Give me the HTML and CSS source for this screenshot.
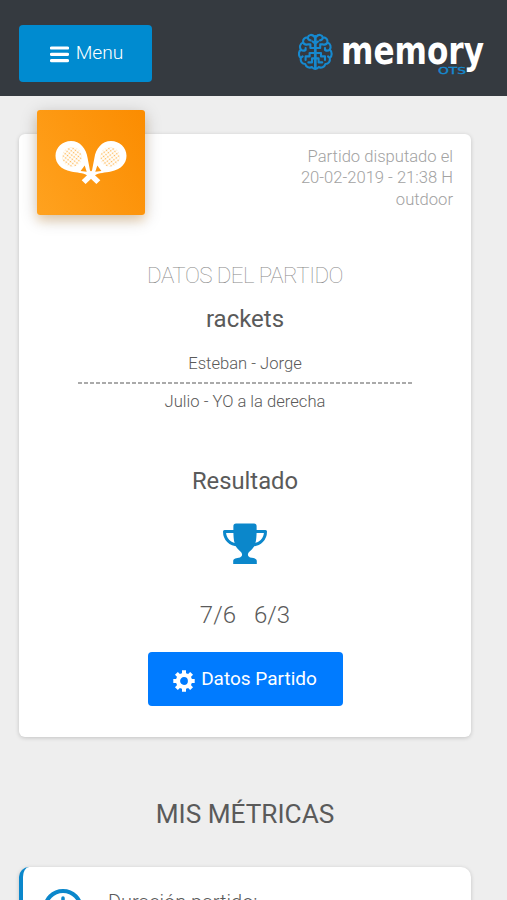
FILE: index.html
```
<!DOCTYPE html>
<html lang="es">
<head>
  <meta charset="UTF-8">
  <meta name="viewport" content="width=device-width, initial-scale=1.0">
  <title>Memory OTS - Datos del partido</title>
  <link rel="stylesheet" href="styles.css">
</head>
<body>
  <header class="navbar">
    <button class="btn btn-menu">
      <svg class="icon-menu" width="19" height="17" viewBox="0 0 19 17"><path d="M1.5 2H17.5M1.5 8.3H17.5M1.5 14.6H17.5" stroke="currentColor" stroke-width="3.2" stroke-linecap="round"/></svg>
      <span>Menu</span>
    </button>
    <svg class="logo" width="188" height="46" viewBox="0 0 188 46">
      <g fill="none" stroke="#1689cf" stroke-width="2.1" stroke-linecap="round" stroke-linejoin="round">
        <path id="lobe" d="M16.6 4C14 .8 10.6 1.6 9.8 4.4C6.6 4.2 4.6 6.6 5.2 9.4C2 10.8 1.2 14 2.8 16.4C.2 19 .4 23 2.8 25C2.2 28.4 4.2 31 7.2 31C8 34.2 11.6 35.4 14 34C15 35.6 16 36 17 36V3M9.8 4.4Q10 7.2 12.6 7.4M5.2 9.4Q6.2 12.2 9.6 11.4H12.4V15H17M2.8 16.4Q5 18.6 7.6 17V15M17 20H11.6V23.4H7.6V27M2.8 25L4.6 23.4M17 25.4H14V29.4H10.4M17 10.6L14.6 8.4"/>
        <use href="#lobe" transform="matrix(-1 0 0 1 34.6 0)"/>
      </g>
      <text class="logo-name" x="43" y="31" textLength="143" lengthAdjust="spacingAndGlyphs">memory</text>
      <text class="logo-sub" x="140" y="40.5" textLength="28" lengthAdjust="spacingAndGlyphs">OTS</text>
    </svg>
  </header>

  <main class="content">
    <section class="card">
      <div class="card-top">
        <div class="card-icon">
          <svg width="72" height="46" viewBox="0 0 72 46">
            <defs>
              <pattern id="strings" width="3" height="3" patternUnits="userSpaceOnUse" patternTransform="rotate(38)">
                <circle cx="1.5" cy="1.5" r=".85" fill="#ffb550"/>
              </pattern>
              <g id="racket">
                <path fill="#fff" fill-rule="evenodd" d="M16 1C25 1 31.2 8.5 32.6 18L35 30.5L45.3 40.2L41.4 44L32.4 35.4C28 32.6 22 33 16 31.6C6 29.6 .5 23.4 .5 15.8C.5 7.4 7.4 1 16 1ZM29.7 25.5L25.6 31L31.7 31.8Z"/>
                <circle cx="17" cy="17" r="10" fill="url(#strings)"/>
              </g>
            </defs>
            <use href="#racket"/>
            <use href="#racket" transform="matrix(-1 0 0 1 72 0)"/>
          </svg>
        </div>
        <p class="card-info">Partido disputado el<br>20-02-2019 - 21:38 H<br>outdoor</p>
      </div>
      <h2 class="card-title">DATOS DEL PARTIDO</h2>
      <h3 class="match-name">rackets</h3>
      <p class="team">Esteban - Jorge</p>
      <svg class="divider" width="334" height="2"><path d="M0 1H334" stroke="#aaa" stroke-width="2" stroke-dasharray="4 2"/></svg>
      <p class="team team-second">Julio - YO a la derecha</p>
      <h3 class="result-title">Resultado</h3>
      <svg class="trophy" width="46" height="42" viewBox="0 0 46 42">
        <path fill="#0b87cb" d="M14 .5H32Q34.6 .5 34.6 3C34.8 18 34 23.5 27.6 28.4C25.2 30.4 25.4 33.5 28 34.4C31.5 35 34.8 35.2 34.8 38V41H11.2V38C11.2 35.2 14.5 35 18 34.4C20.6 33.5 20.8 30.4 18.4 28.4C12 23.5 11.2 18 11.4 3Q11.4 .5 14 .5Z"/>
        <path fill="none" stroke="#0b87cb" stroke-width="3" stroke-linejoin="round" d="M12 8.5H2.5C2.5 16 8 22 16 22M34 8.5H43.5C43.5 16 38 22 30 22"/>
      </svg>
      <p class="score"><span>7/6</span><span>6/3</span></p>
      <button class="btn btn-primary">
        <svg class="icon-gear" width="22" height="22" viewBox="0 0 22 22">
          <circle cx="11" cy="11" r="6" fill="none" stroke="#fff" stroke-width="4.2"/>
          <path stroke="#fff" stroke-width="4" d="M11 .3V4M11 18V21.7M.3 11H4M18 11H21.7M3.4 3.4L6 6M16 16L18.6 18.6M18.6 3.4L16 6M6 16L3.4 18.6"/>
        </svg>
        <span>Datos Partido</span>
      </button>
    </section>

    <h2 class="section-title">MIS MÉTRICAS</h2>

    <section class="card metric">
      <svg class="icon-clock" width="40" height="40" viewBox="0 0 40 40" fill="none" stroke="#0b87cb">
        <circle cx="20" cy="20" r="18" stroke-width="4"/>
        <path d="M20 9V21L27 26" stroke-width="3.5" stroke-linecap="round"/>
      </svg>
      <p class="metric-label">Duración partido:</p>
    </section>
  </main>
</body>
</html>
```
FILE: styles.css
```
* { box-sizing: border-box; }
body { font-family: Roboto, "Liberation Sans", sans-serif; margin: 0; height: 900px; overflow: hidden; background: #eee; color: #5a5a5a; }
h2, h3, p { margin: 0; font-weight: 400; }
svg { display: block; flex-shrink: 0; }

.navbar { display: flex; justify-content: space-between; align-items: flex-start; height: 96px; padding: 25px 21px 0 19px; background: #353a40; }
.btn { display: flex; align-items: center; justify-content: center; border: 0; border-radius: 4px; padding: 0; color: #fff; font-family: inherit; }
.btn-menu { width: 133px; height: 57px; padding-left: 2px; gap: 7px; background: #008bd0; font-size: 19.2px; font-weight: 300; }
.btn-menu span { margin-top: -2px; }
.icon-menu { margin-top: 2px; }
.logo { margin-top: 8px; }
.logo-name { font-family: "DejaVu Sans", sans-serif; font-size: 39px; font-weight: 700; fill: #fff; }
.logo-sub { font-family: "DejaVu Sans", sans-serif; font-size: 8px; fill: #1689cf; stroke: #1689cf; stroke-width: 0.3px; }

.content { padding: 38px 36px 0 19px; }
.card { display: flex; flex-direction: column; align-items: center; background: #fff; border-radius: 6px; padding: 12px 18px 31px; box-shadow: 0 1px 4px rgba(0, 0, 0, 0.18); }
.card-top { display: flex; justify-content: space-between; width: 100%; height: 64px; }
.card-icon { display: flex; align-items: center; justify-content: center; width: 108px; height: 105px; margin-top: -36px; border-radius: 3px; background: linear-gradient(60deg, #ffa21f, #fb8c00); box-shadow: 0 4px 18px rgba(0, 0, 0, 0.2), 0 6px 10px rgba(255, 152, 0, 0.2); }
.card-info { color: #a2a2a2; font-size: 16.6px; font-weight: 300; line-height: 21.3px; text-align: right; }
.card-title { margin-top: 50px; color: #888; font-size: 22.4px; font-weight: 100; line-height: 30px; letter-spacing: -0.55px; }
.match-name { margin-top: 14px; font-size: 24px; line-height: 30px; }
.team { margin-top: 20px; font-size: 16.6px; font-weight: 300; line-height: 20px; }
.divider { margin-top: 8px; }
.team-second { margin-top: 8px; }
.result-title { margin-top: 54px; font-size: 23.8px; line-height: 30px; }
.trophy { margin-top: 27px; }
.score { display: flex; gap: 18px; margin-top: 35px; font-size: 24px; font-weight: 300; line-height: 30px; }
.btn-primary { width: 195px; height: 54px; margin-top: 22px; gap: 6px; background: #007bff; font-size: 19px; }
.btn-primary span { margin-top: -2px; }
.icon-gear { margin-top: 3px; }

.section-title { margin-top: 58px; font-size: 26.2px; line-height: 38px; text-align: center; }
.metric { flex-direction: row; align-items: flex-start; gap: 25px; height: 120px; margin-top: 34px; padding: 22px 20px 0; border-left: 4px solid #0b87cb; border-radius: 10px; }
.metric-label { margin-top: 1px; font-size: 20px; font-weight: 300; line-height: 24px; }
```
